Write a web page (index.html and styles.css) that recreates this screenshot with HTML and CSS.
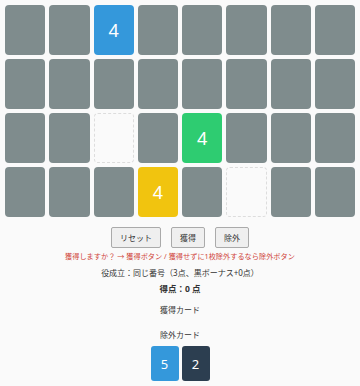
FILE: index.html
```html
<!DOCTYPE html>
<html lang="ja">
<head>
    <meta charset="utf-8" />
    <title>カードゲーム</title>
    <link rel="stylesheet" href="styles.css">
</head>
<body>
    <div id="board">
        <div class="card back"></div>
        <div class="card back"></div>
        <div class="card blue">4</div>
        <div class="card back"></div>
        <div class="card back"></div>
        <div class="card back"></div>
        <div class="card back"></div>
        <div class="card back"></div>

        <div class="card back"></div>
        <div class="card back"></div>
        <div class="card back"></div>
        <div class="card back"></div>
        <div class="card back"></div>
        <div class="card back"></div>
        <div class="card back"></div>
        <div class="card back"></div>

        <div class="card back"></div>
        <div class="card back"></div>
        <div class="card empty"></div>
        <div class="card back"></div>
        <div class="card green">4</div>
        <div class="card back"></div>
        <div class="card back"></div>
        <div class="card back"></div>

        <div class="card back"></div>
        <div class="card back"></div>
        <div class="card back"></div>
        <div class="card yellow">4</div>
        <div class="card back"></div>
        <div class="card empty"></div>
        <div class="card back"></div>
        <div class="card back"></div>
    </div>

    <div id="controls">
        <button>リセット</button>
        <button>獲得</button>
        <button>除外</button>
    </div>
    <div id="message">獲得しますか？ → 獲得ボタン / 獲得せずに1枚除外するなら除外ボタン</div>
    <div id="yaku">役成立：同じ番号（3点、黒ボーナス+0点）</div>
    <div id="score">得点：0 点</div>

    <div class="pileTitle">獲得カード</div>
    <div class="pile"></div>

    <div class="pileTitle">除外カード</div>
    <div class="pile">
        <div class="mini blue">5</div>
        <div class="mini dark">2</div>
    </div>
</body>
</html>
```

FILE: styles.css
```css
html, body {
    margin: 0;
    padding: 0;
}

body {
    background-color: #fafafa;
    color: #333333;
    font-family: "Noto Sans", "Noto Sans CJK JP", sans-serif;
    font-size: 8px;
    text-align: center;
    padding: 5px;
}

#board {
    display: grid;
    grid-template-columns: repeat(8, 1fr);
    gap: 4px;
}

.card {
    height: 50px;
    border-radius: 4px;
    box-sizing: border-box;
    display: flex;
    align-items: center;
    justify-content: center;
    color: #FFFFFF;
    font-size: 18px;
}

.back {
    background-color: #7f8c8d;
}

.empty {
    background-color: #fafafa;
    border: 1px dashed #dddddd;
}

.blue {
    background-color: #3498db;
}

.green {
    background-color: #2ecc71;
}

.yellow {
    background-color: #f1c40f;
}

.dark {
    background-color: #2c3e50;
}

#controls {
    display: flex;
    justify-content: center;
    gap: 10px;
    margin-top: 10px;
}

#controls button {
    font-family: "Noto Sans CJK JP", sans-serif;
    font-size: 8px;
    height: 21px;
    padding: 0 8px;
    color: #333333;
    background-color: #efefef;
    border: 1px solid #aaaaaa;
    border-radius: 2px;
}

#message {
    color: #d0453a;
    font-size: 7.2px;
    line-height: 12px;
    margin-top: 2px;
}

#yaku {
    line-height: 14px;
    margin-top: 4px;
}

#score {
    font-weight: bold;
    font-size: 8.5px;
    line-height: 14px;
    margin-top: 2px;
}

.pileTitle {
    line-height: 14px;
    margin-top: 6.5px;
}

.pile {
    display: flex;
    justify-content: center;
    gap: 3px;
    margin-top: 4.5px;
}

.mini {
    width: 28px;
    height: 35px;
    border-radius: 3px;
    display: flex;
    align-items: center;
    justify-content: center;
    color: #FFFFFF;
    font-size: 13px;
}
```
